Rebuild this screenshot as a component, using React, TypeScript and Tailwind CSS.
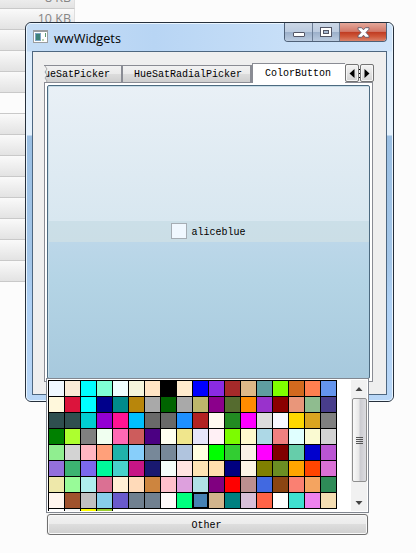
const COLORS = `aliceblue antiquewhite aqua aquamarine azure beige bisque black blanchedalmond blue blueviolet brown burlywood cadetblue chartreuse chocolate coral cornflowerblue
cornsilk crimson cyan darkblue darkcyan darkgoldenrod darkgray darkgreen darkgrey darkkhaki darkmagenta darkolivegreen darkorange darkorchid darkred darksalmon darkseagreen darkslateblue
darkslategray darkslategrey darkturquoise darkviolet deeppink deepskyblue dimgray dimgrey dodgerblue firebrick floralwhite forestgreen fuchsia gainsboro ghostwhite gold goldenrod gray
green greenyellow grey honeydew hotpink indianred indigo ivory khaki lavender lavenderblush lawngreen lemonchiffon lightblue lightcoral lightcyan lightgoldenrodyellow lightgray
lightgreen lightgrey lightpink lightsalmon lightseagreen lightskyblue lightslategray lightslategrey lightsteelblue lightyellow lime limegreen linen magenta maroon mediumaquamarine mediumblue mediumorchid
mediumpurple mediumseagreen mediumslateblue mediumspringgreen mediumturquoise mediumvioletred midnightblue mintcream mistyrose moccasin navajowhite navy oldlace olive olivedrab orange orangered orchid
palegoldenrod palegreen paleturquoise palevioletred papayawhip peachpuff peru pink plum powderblue purple red rosybrown royalblue saddlebrown salmon sandybrown seagreen
seashell sienna silver skyblue slateblue slategray slategrey snow springgreen steelblue tan teal thistle tomato transparent turquoise violet wheat
white whitesmoke yellow yellowgreen`.split(/\s+/);

const ROWS = ["8 KB", "10 KB", "", "", "", "", "", "", "", "", "", "", "", ""];

function FileList() {
  return (
    <div className="-mt-[13px] w-[75px]">
      {ROWS.map((t, i) => (
        <div
          key={i}
          className={`flex h-[21px] items-center justify-end border-r border-b border-r-[#dedede] border-b-[#c9c9c9] pr-[3px] font-['Open_Sans',sans-serif] text-[12.5px] leading-none text-[#858585] ${
            i === 5 ? "bg-[#fcfcfc]" : "bg-linear-to-b from-[#fafafa] to-[#e3e3e3]"
          }`}
        >
          {t}
        </div>
      ))}
    </div>
  );
}

function TitleBar() {
  return (
    <div className="flex h-[28px] items-start">
      <svg className="mt-[7px] ml-[7px] shrink-0" width="15" height="13" shapeRendering="crispEdges">
        <rect width="15" height="13" fill="#9a9da0" />
        <rect x="1" y="2" width="13" height="10" fill="#fff" />
        <rect x="2" y="3" width="6" height="8" fill="#7da5c4" />
        <rect x="3" y="4" width="4" height="6" fill="#3e8178" />
        <rect x="9" y="9" width="2" height="2" fill="#b9d3b0" />
        <rect x="12" y="3" width="1" height="4" fill="#5d9b72" />
      </svg>
      <span className="mt-[7px] ml-[6px] flex-1 font-['Open_Sans','Noto_Sans',sans-serif] text-[12.7px] leading-[16px] text-black">
        wwWidgets
      </span>
      <div className="mr-[6px] flex h-[19px] w-[103px] shrink-0 overflow-hidden rounded-b-[4px] border border-t-0 border-[#4f6178]">
        <div className="flex w-[28px] items-center justify-center border-r border-[#6b7d95] bg-[linear-gradient(#cbd7e6_0,#bccbdf_50%,#9bafc9_50%,#bacbe0_100%)] pt-[4px]">
          <div className="h-[5px] w-[12px] rounded-[1px] border border-[#535666] bg-white" />
        </div>
        <div className="flex w-[27px] items-center justify-center border-r border-[#6b7d95] bg-[linear-gradient(#cbd7e6_0,#bccbdf_50%,#9bafc9_50%,#bacbe0_100%)]">
          <svg width="12" height="10" shapeRendering="crispEdges">
            <rect x=".5" y=".5" width="11" height="9" fill="#fff" stroke="#535666" />
            <rect x="3.5" y="3.5" width="5" height="3" fill="#a8bad2" stroke="#535666" />
          </svg>
        </div>
        <div className="flex flex-1 items-center justify-center bg-[linear-gradient(#e4a89b_0,#d27868_47%,#bf3a21_50%,#cf583a_75%,#d9826a_100%)]">
          <svg width="13" height="11" viewBox="0 0 13 11">
            <path
              d="M1 .7H4.600L6.500 2.800L8.400 .7H12V2.200L9 5.500L12 8.800V10.300H8.400L6.500 8.200L4.600 10.300H1V8.800L4 5.500L1 2.200Z"
              fill="#fff"
              stroke="#5f5a6b"
              strokeWidth=".9"
            />
          </svg>
        </div>
      </div>
    </div>
  );
}

function ScrollButton({ left }: { left?: boolean }) {
  return (
    <div className="flex h-[18px] w-[14px] items-center justify-center rounded-[2px] border border-[#747474] bg-linear-to-b from-[#f4f4f4] to-[#d3d3d3] shadow-[inset_0_0_0_1px_#f6f6f6]">
      <svg width="6" height="9">
        <path d={left ? "M5.500 0v9L.5 4.500Z" : "M.5 0v9l5-4.500Z"} fill="#000" />
      </svg>
    </div>
  );
}

function Tabs() {
  const tab =
    "mt-[2px] h-[18px] border-t border-r-2 border-b border-[#8a8c94] bg-[linear-gradient(#f2f2f2_0,#eaeaea_50%,#dcdcdc_52%,#cfcfcf_100%)] leading-[18px]";
  return (
    <div className="ml-[11px] flex h-[20px] w-[331px] text-[10px] whitespace-nowrap">
      <div className={`${tab} relative flex w-[79px] justify-end overflow-hidden pr-[11px]`}>
        HueSatPicker
        <svg className="absolute top-0 left-0" width="4" height="17">
          <path d="M0 0h1l2 3-2 3 2 3-2 3 2 3-1 2H0Z" fill="#f0f0f0" />
          <path d="M1 0l2 3-2 3 2 3-2 3 2 3-1 2" fill="none" stroke="#aaa" />
        </svg>
      </div>
      <div className={`${tab} w-[129px] border-r pl-[11px]`}>HueSatRadialPicker</div>
      <div className="h-[20px] w-[93px] border-t border-l border-[#8a8c94] bg-white pl-[12px] leading-[20px]">ColorButton</div>
      <div className="mt-px flex">
        <ScrollButton left />
        <div className="flex w-px flex-col justify-center gap-[3px]">
          <div className="h-px w-px bg-black" />
          <div className="h-px w-px bg-black" />
          <div className="h-px w-px bg-black" />
        </div>
        <ScrollButton />
      </div>
    </div>
  );
}

function MainWindow() {
  return (
    <div className="absolute top-[22px] left-[25px] h-[380px] w-[369px] overflow-hidden rounded-[6px] border border-[#26303c] bg-[linear-gradient(90deg,#c5ddf6_0,#b8d5f4_35%,#c9e0f8_75%,#cfe4fa_100%)]">
      <div className="h-[378px] rounded-[5px] bg-[linear-gradient(#ffffff00_28px,#dcecfc_29px,#e6f2fd_112px,#9bbfe3_113px,#a4c6e8_240px,#afd1f5_280px,#b9d7f7_100%)] shadow-[inset_0_0_0_1px_#e9f5ff]">
        <TitleBar />
        <div className="mx-[6px] h-[344px] border border-[#4e6780] bg-[#efefef] pt-[11px]">
          <Tabs />
          <div className="-mt-px ml-[11px] h-[300px] w-[329px] border border-[#8a8c94] bg-white pt-[2px] pl-[2px]">
            <div className="flex h-[294px] w-[323px] items-center justify-center rounded-[2px] border border-[#4c6a80] bg-[linear-gradient(#e9f0f6_0,#d8e7f0_135px,#cbdfe8_135px,#cbdee6_156px,#bcd7e9_156px,#b4d4e5_195px,#a7c9dd_100%)] shadow-[inset_1px_1px_0_#c7dce6]">
              <div className="-mt-[3px] flex items-center">
                <div className="h-[16px] w-[16px] border border-[#a5adb4] bg-[aliceblue]" />
                <span className="ml-[4px] pt-[4px] text-[10px] leading-[14px]">aliceblue</span>
              </div>
            </div>
          </div>
        </div>
      </div>
    </div>
  );
}

function Palette() {
  return (
    <div className="absolute top-[378px] left-[46px] w-[323px] bg-[#f5f5f5]">
      <div className="flex h-[135px] justify-between border border-[#828790] bg-white pt-px pl-px">
        <div className="h-[131px] w-[289px] overflow-hidden">
          <div className="grid grid-cols-[repeat(18,16px)] auto-rows-[16px]">
            {COLORS.map((c) => (
              <div
                key={c}
                className={`h-[17px] w-[17px] border border-black ${c === "steelblue" ? "z-10 shadow-[inset_0_0_0_1px_#000]" : ""}`}
                style={{ backgroundColor: c }}
              />
            ))}
          </div>
        </div>
        <div className="mr-px flex h-[131px] w-[16px] flex-col items-center bg-[#f1f1f1]">
          <svg width="16" height="18">
            <path d="M4.500 11L8 7l3.500 4Z" fill="#444" />
          </svg>
          <div className="flex h-[84px] w-[15px] flex-col items-center justify-center gap-px rounded-[2px] border border-[#8f8f8f] bg-[linear-gradient(90deg,#fafafa_0,#e8e8e8_45%,#cbcbd0_55%,#dcdce0_100%)]">
            {[0, 1, 2, 3].map((i) => (
              <div key={i} className="h-px w-[7px] bg-[#555]" />
            ))}
          </div>
          <svg width="16" height="29">
            <path d="M4.500 19L8 23l3.500-4Z" fill="#444" />
          </svg>
        </div>
      </div>
      <div className="mt-px ml-px flex h-[21px] w-[321px] items-center justify-center rounded-[3px] border border-[#707070] bg-[linear-gradient(#f2f2f2_0,#ebebeb_48%,#dddddd_50%,#cfcfcf_100%)] pt-[2px] pr-[2px] text-[10px] leading-none shadow-[inset_0_0_0_1px_#f8f8f8]">
        Other
      </div>
    </div>
  );
}

export default function App() {
  return (
    <div className="relative h-[553px] w-[416px] overflow-hidden bg-[#fcfcfc] pt-px font-['Liberation_Mono',monospace] font-medium text-black">
      <FileList />
      <MainWindow />
      <Palette />
    </div>
  );
}
